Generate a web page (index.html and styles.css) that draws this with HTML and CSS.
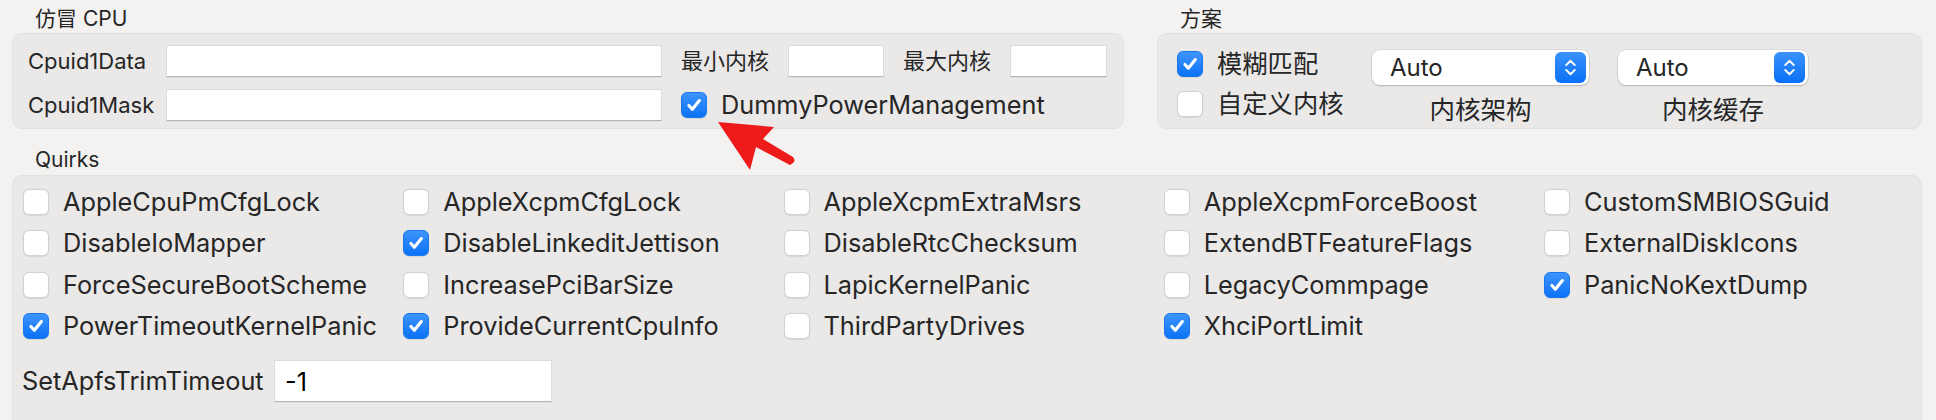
FILE: index.html
```html
<!DOCTYPE html>
<html lang="zh">
<head>
<meta charset="utf-8">
<link rel="stylesheet" href="styles.css">
</head>
<body>
<div class="page">
  <div class="top">
    <section class="group g-cpu">
      <div class="gtitle">仿冒 CPU</div>
      <div class="box box-cpu">
        <div class="row">
          <span class="lbl lbl-id">Cpuid1Data</span>
          <input class="field f-id" type="text" value="">
          <span class="lbl lbl-core">最小内核</span>
          <input class="field f-core" type="text" value="">
          <span class="lbl lbl-core">最大内核</span>
          <input class="field f-core f-core2" type="text" value="">
        </div>
        <div class="row">
          <span class="lbl lbl-id">Cpuid1Mask</span>
          <input class="field f-id" type="text" value="">
          <label class="chk chk-dpm"><span class="cb on"><svg viewBox="0 0 26 26"><path d="M7.5 13.5 L11.2 17.6 L18.8 8.2"/></svg></span><span class="ctext">DummyPowerManagement</span></label>
        </div>
      </div>
    </section>
    <section class="group g-plan">
      <div class="gtitle">方案</div>
      <div class="box box-plan">
        <div class="plan-checks">
          <label class="chk"><span class="cb on"><svg viewBox="0 0 26 26"><path d="M7.5 13.5 L11.2 17.6 L18.8 8.2"/></svg></span><span class="ctext">模糊匹配</span></label>
          <label class="chk"><span class="cb"></span><span class="ctext">自定义内核</span></label>
        </div>
        <div class="popcol pc1">
          <div class="popup"><span class="ptext">Auto</span><span class="stepper"><svg viewBox="0 0 31 32"><path d="M11 13.5 L15.5 9 L20 13.5"/><path d="M11 18.5 L15.5 23 L20 18.5"/></svg></span></div>
          <div class="plabel">内核架构</div>
        </div>
        <div class="popcol pc2">
          <div class="popup"><span class="ptext">Auto</span><span class="stepper"><svg viewBox="0 0 31 32"><path d="M11 13.5 L15.5 9 L20 13.5"/><path d="M11 18.5 L15.5 23 L20 18.5"/></svg></span></div>
          <div class="plabel">内核缓存</div>
        </div>
      </div>
    </section>
  </div>

  <section class="group g-quirks">
    <div class="gtitle qtitle">Quirks</div>
    <div class="box box-quirks">
      <div class="qgrid">
        <label class="chk"><span class="cb"></span><span class="ctext">AppleCpuPmCfgLock</span></label>
        <label class="chk"><span class="cb"></span><span class="ctext">AppleXcpmCfgLock</span></label>
        <label class="chk"><span class="cb"></span><span class="ctext">AppleXcpmExtraMsrs</span></label>
        <label class="chk"><span class="cb"></span><span class="ctext">AppleXcpmForceBoost</span></label>
        <label class="chk"><span class="cb"></span><span class="ctext">CustomSMBIOSGuid</span></label>

        <label class="chk"><span class="cb"></span><span class="ctext">DisableIoMapper</span></label>
        <label class="chk"><span class="cb on"><svg viewBox="0 0 26 26"><path d="M7.5 13.5 L11.2 17.6 L18.8 8.2"/></svg></span><span class="ctext">DisableLinkeditJettison</span></label>
        <label class="chk"><span class="cb"></span><span class="ctext">DisableRtcChecksum</span></label>
        <label class="chk"><span class="cb"></span><span class="ctext">ExtendBTFeatureFlags</span></label>
        <label class="chk"><span class="cb"></span><span class="ctext">ExternalDiskIcons</span></label>

        <label class="chk"><span class="cb"></span><span class="ctext">ForceSecureBootScheme</span></label>
        <label class="chk"><span class="cb"></span><span class="ctext">IncreasePciBarSize</span></label>
        <label class="chk"><span class="cb"></span><span class="ctext">LapicKernelPanic</span></label>
        <label class="chk"><span class="cb"></span><span class="ctext">LegacyCommpage</span></label>
        <label class="chk"><span class="cb on"><svg viewBox="0 0 26 26"><path d="M7.5 13.5 L11.2 17.6 L18.8 8.2"/></svg></span><span class="ctext">PanicNoKextDump</span></label>

        <label class="chk"><span class="cb on"><svg viewBox="0 0 26 26"><path d="M7.5 13.5 L11.2 17.6 L18.8 8.2"/></svg></span><span class="ctext">PowerTimeoutKernelPanic</span></label>
        <label class="chk"><span class="cb on"><svg viewBox="0 0 26 26"><path d="M7.5 13.5 L11.2 17.6 L18.8 8.2"/></svg></span><span class="ctext">ProvideCurrentCpuInfo</span></label>
        <label class="chk"><span class="cb"></span><span class="ctext">ThirdPartyDrives</span></label>
        <label class="chk"><span class="cb on"><svg viewBox="0 0 26 26"><path d="M7.5 13.5 L11.2 17.6 L18.8 8.2"/></svg></span><span class="ctext">XhciPortLimit</span></label>
      </div>
      <div class="trim">
        <span class="ctext trim-lbl">SetApfsTrimTimeout</span>
        <input class="field f-trim" type="text" value="-1">
      </div>
    </div>
  </section>

  <svg class="arrow" viewBox="0 0 100 60" width="100" height="60">
    <path d="M3 2 L59 7 L48 19 L78 37 Q82 42 75 45 L41 27 L35 50 Z"/>
  </svg>
</div>
</body>
</html>
```

FILE: styles.css
```css
* { box-sizing: border-box; }
html, body { margin: 0; padding: 0; }
body {
  background: #f3f2f1;
  font-family: Inter, "Noto Sans CJK SC", sans-serif;
  color: #262626;
  width: 1936px;
  height: 420px;
  overflow: hidden;
}
.page { position: relative; padding: 0 14px 0 12px; }
.top { display: flex; gap: 33px; }
.g-cpu { width: 1112px; }
.g-plan { flex: 1; }

.gtitle {
  height: 33px;
  padding: 4px 0 0 23px;
  font-size: 21px;
  line-height: 29px;
  color: #262626;
}
.qtitle { height: 46px; padding-top: 17px; line-height: 28px; }

.box {
  background: #eae9e8;
  border: 1px solid #e1e0df;
  border-radius: 10px;
}
.box-cpu { height: 96px; padding: 11px 0 0 15px; display: flex; flex-direction: column; gap: 12px; }
.row { display: flex; align-items: center; height: 32px; }
.lbl { font-size: 22px; line-height: 28px; white-space: nowrap; }
.lbl-id { width: 138px; }
.lbl-core { margin-left: 19px; width: 107px; }
.field {
  height: 32px;
  border: 1px solid #dcdcdc;
  border-bottom-color: #b4b4b4;
  border-radius: 0;
  background: #fff;
  box-shadow: 0 1px 0 rgba(0,0,0,0.04);
  padding: 0 8px;
  font: inherit;
  outline: none;
  margin: 0;
}
.f-id { width: 496px; }
.f-core { width: 96px; }
.f-core2 { width: 97px; }

.chk { display: flex; align-items: center; gap: 14px; white-space: nowrap; height: 26px; line-height: 26px; }
.chk-dpm { margin-left: 19px; }
.ctext { font-size: 25.3px; line-height: 26px; }
.cb {
  flex: none;
  width: 26px;
  height: 26px;
  border-radius: 6px;
  background: #fff;
  border: 1px solid #d2d1d0;
  box-shadow: 0 0.5px 1px rgba(0,0,0,0.08);
  display: flex;
  align-items: center;
  justify-content: center;
}
.cb.on {
  background: linear-gradient(#3e94fb, #0b72f6);
  border-color: #1a77ee;
}
.cb svg { width: 26px; height: 26px; display: block; }
.cb svg path { fill: none; stroke: #fff; stroke-width: 3.4; stroke-linecap: round; stroke-linejoin: round; }

.box-plan { height: 96px; display: flex; padding-left: 19px; }
.plan-checks { width: 195px; padding-top: 17px; display: flex; flex-direction: column; gap: 14px; }
.popcol { display: flex; flex-direction: column; align-items: center; padding-top: 16px; }
.pc1 { width: 217px; }
.pc2 { width: 190px; margin-left: 29px; }
.popup {
  width: 100%;
  height: 35px;
  background: #fff;
  border-radius: 8px;
  box-shadow: 0 0 0 0.5px rgba(0,0,0,0.12), 0 1px 2px rgba(0,0,0,0.18);
  display: flex;
  align-items: center;
  justify-content: space-between;
  padding: 0 3px 0 18px;
}
.ptext { font-size: 24px; line-height: 30px; }
.stepper {
  width: 31px;
  height: 31px;
  border-radius: 6px;
  background: linear-gradient(#3a92fb, #0a70f5);
  display: block;
}
.stepper svg { width: 31px; height: 31px; display: block; }
.stepper svg path { fill: none; stroke: #fff; stroke-width: 2; stroke-linecap: round; stroke-linejoin: round; }
.plabel { font-size: 25.5px; line-height: 30px; margin-top: 10px; }

.box-quirks { height: 260px; padding: 5px 0 0 10px; border-bottom-left-radius: 0; border-bottom-right-radius: 0; }
.qgrid { display: grid; grid-template-columns: repeat(5, 380.25px); grid-auto-rows: 41.5px; align-items: center; }
.trim { display: flex; align-items: center; margin-top: 13px; margin-left: -1px; }
.trim-lbl { width: 252px; line-height: 30px; }
.f-trim { width: 278px; height: 42px; font-size: 25.3px; padding: 0 10px; }

.arrow { position: absolute; left: 715px; top: 120px; }
.arrow path { fill: #ee1b1b; }
```
